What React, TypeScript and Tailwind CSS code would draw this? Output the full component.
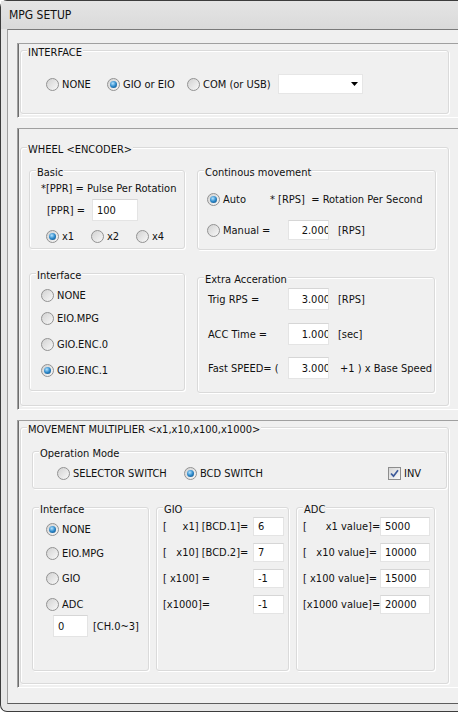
import type { ReactNode } from "react";

function Radio({ checked }: { checked?: boolean }) {
  return (
    <span className="w-[13px] h-[13px] shrink-0 rounded-full border border-[#929292] bg-[linear-gradient(135deg,#d2d2d2,#f8f8f8)] flex items-center justify-center">
      {checked && <span className="w-[7px] h-[7px] rounded-full bg-[radial-gradient(circle_at_40%_35%,#b4e3ff_0%,#2c88c9_50%,#0c4274_100%)]" />}
    </span>
  );
}

function RadioItem({ label, checked, className = "" }: { label: string; checked?: boolean; className?: string }) {
  return (
    <div className={`flex items-center shrink-0 ${className}`}>
      <Radio checked={checked} />
      <span className="ml-[3px] whitespace-nowrap">{label}</span>
    </div>
  );
}

function Edit({ className = "", right, children }: { className?: string; right?: boolean; children: ReactNode }) {
  return (
    <div className={`shrink-0 bg-white border border-[#e4e4e4] border-t-[#d6d6d6] flex items-center overflow-hidden whitespace-nowrap ${right ? "justify-end" : "pl-[4px]"} ${className}`}>
      {right ? <span className="mr-[-2px]">{children}</span> : children}
    </div>
  );
}

function Group({ label, className = "", children }: { label: string; className?: string; children?: ReactNode }) {
  return (
    <div className={`relative shrink-0 border border-[#dadada] rounded-[3px] shadow-[inset_1px_1px_0_#fff,1px_1px_0_#fff] ${className}`}>
      <span className="absolute left-[6px] top-[-5px] px-[1px] bg-[#f0f0f0] leading-[13px] whitespace-nowrap">{label}</span>
      {children}
    </div>
  );
}

function Panel({ className = "", children }: { className?: string; children: ReactNode }) {
  return (
    <div className={`shrink-0 border-t border-l border-b border-t-[#a0a0a0] border-l-[#a0a0a0] border-b-white shadow-[inset_1px_0_0_#6e6e6e] ${className}`}>
      {children}
    </div>
  );
}

export default function App() {
  return (
    <div className="w-[458px] h-[712px] overflow-hidden bg-white">
      <div className="w-[458px] h-[712px] flex flex-col bg-[#e7e7e7] border-l border-t border-b border-[#3c3c3c] rounded-tl-[7px] rounded-bl-[7px] text-[11px] leading-[13px] text-[#111] font-['DejaVu_Sans_Condensed','DejaVu_Sans',sans-serif] [font-stretch:semi-condensed]">
        <div className="h-[28px] shrink-0 flex items-center pl-[8px] text-[12px] bg-[linear-gradient(#e4e4e4,#dadada)]">MPG SETUP</div>

        <div className="flex-1 ml-[6px] mb-[7px] bg-[#f0f0f0] border-t border-l border-b border-t-[#7a7a7a] border-l-[#a0a0a0] border-b-[#5c5c5c] pt-[13px] pl-[9px] flex flex-col gap-[10px]">
          {/* INTERFACE */}
          <Panel className="h-[75px]">
            <Group label="INTERFACE" className="ml-[2px] mt-[6px] mr-[9px] h-[64px]">
              <div className="flex items-center h-[20px] mt-[23px] pl-[25px]">
                <RadioItem label="NONE" className="w-[61px]" />
                <RadioItem label="GIO or EIO" checked className="w-[80px]" />
                <RadioItem label="COM (or USB)" className="w-[91px]" />
                <div className="w-[85px] h-[20px] bg-white border border-[#e6e6e6] flex items-center justify-end pr-[4px]">
                  <svg width="7" height="4" viewBox="0 0 7 4">
                    <polygon points="0,0 7,0 3.5,4" fill="#000" />
                  </svg>
                </div>
              </div>
            </Group>
          </Panel>

          {/* WHEEL */}
          <Panel className="h-[282px]">
            <Group label="WHEEL <ENCODER>" className="ml-[2px] mt-[18px] mr-[9px] h-[259px]">
              <div className="flex items-start mt-[22px] pl-[8px] gap-[12px]">
                <Group label="Basic" className="w-[156px] h-[79px]">
                  <div className="pl-[11px] mt-[10px] h-[14px] flex items-center whitespace-nowrap">*[PPR] = Pulse Per Rotation</div>
                  <div className="flex items-center mt-[4px] h-[22px] pl-[17px]">
                    <span className="w-[45px]">[PPR] =</span>
                    <Edit className="w-[46px] h-[22px]">100</Edit>
                  </div>
                  <div className="flex items-center mt-[7px] h-[16px] pl-[16px]">
                    <RadioItem label="x1" checked className="w-[45px]" />
                    <RadioItem label="x2" className="w-[45px]" />
                    <RadioItem label="x4" className="w-[45px]" />
                  </div>
                </Group>
                <Group label="Continous movement" className="w-[239px] h-[80px]">
                  <div className="flex items-center mt-[18px] h-[20px] pl-[9px]">
                    <RadioItem label="Auto" checked className="w-[63px]" />
                    <span className="whitespace-pre">{"* [RPS]  = Rotation Per Second"}</span>
                  </div>
                  <div className="flex items-center mt-[11px] h-[20px] pl-[9px]">
                    <RadioItem label="Manual =" className="w-[81px]" />
                    <Edit right className="w-[41px] h-[20px]">2.000</Edit>
                    <span className="ml-[9px]">[RPS]</span>
                  </div>
                </Group>
              </div>

              <div className="flex items-start mt-[23px] pl-[8px] gap-[12px]">
                <Group label="Interface" className="w-[156px] h-[118px] pl-[11px]">
                  <RadioItem label="NONE" className="h-[20px] mt-[11px]" />
                  <RadioItem label="EIO.MPG" className="h-[20px] mt-[3px]" />
                  <RadioItem label="GIO.ENC.0" className="h-[20px] mt-[6px]" />
                  <RadioItem label="GIO.ENC.1" checked className="h-[20px] mt-[6px]" />
                </Group>
                <Group label="Extra Acceration" className="w-[238px] h-[116px] mt-[4px] pl-[10px]">
                  <div className="flex items-center h-[22px] mt-[10px]">
                    <span className="w-[80px]">Trig RPS =</span>
                    <Edit right className="w-[41px] h-[22px]">3.000</Edit>
                    <span className="ml-[9px]">[RPS]</span>
                  </div>
                  <div className="flex items-center h-[22px] mt-[13px]">
                    <span className="w-[80px]">ACC Time =</span>
                    <Edit right className="w-[41px] h-[22px]">1.000</Edit>
                    <span className="ml-[9px]">[sec]</span>
                  </div>
                  <div className="flex items-center h-[22px] mt-[12px]">
                    <span className="w-[80px] whitespace-nowrap">Fast SPEED= (</span>
                    <Edit right className="w-[41px] h-[22px]">3.000</Edit>
                    <span className="ml-[11px] whitespace-nowrap">+1 ) x Base Speed</span>
                  </div>
                </Group>
              </div>
            </Group>
          </Panel>

          {/* MOVEMENT MULTIPLIER */}
          <Panel className="h-[268px]">
            <Group label="MOVEMENT MULTIPLIER <x1,x10,x100,x1000>" className="ml-[2px] mt-[6px] mr-[9px] h-[257px]">
              <Group label="Operation Mode" className="ml-[11px] mt-[23px] w-[415px] h-[38px]">
                <div className="flex items-center mt-[13px] h-[16px] pl-[24px]">
                  <RadioItem label="SELECTOR SWITCH" className="w-[127px]" />
                  <RadioItem label="BCD SWITCH" checked className="w-[204px]" />
                  <div className="flex items-center">
                    <span className="w-[13px] h-[13px] border border-[#8d8d8d] bg-[linear-gradient(135deg,#d6d6d6,#fafafa)] flex items-center justify-center">
                      <svg width="11" height="11" viewBox="0 0 11 11">
                        <path d="M2 5.5 L4.5 8.2 L9 2.2" stroke="#3d5a9a" strokeWidth="1.7" fill="none" />
                      </svg>
                    </span>
                    <span className="ml-[3px]">INV</span>
                  </div>
                </div>
              </Group>

              <div className="flex items-start mt-[18px] ml-[11px] gap-[7px]">
                <Group label="Interface" className="w-[117px] h-[164px]">
                  <div className="pl-[13px]">
                    <RadioItem label="NONE" checked className="h-[20px] mt-[11px]" />
                    <RadioItem label="EIO.MPG" className="h-[20px] mt-[4px]" />
                    <RadioItem label="GIO" className="h-[20px] mt-[5px]" />
                    <RadioItem label="ADC" className="h-[20px] mt-[6px]" />
                  </div>
                  <div className="flex items-center mt-[1px] h-[22px] pl-[20px]">
                    <Edit className="w-[35px] h-[22px]">0</Edit>
                    <span className="ml-[5px] whitespace-nowrap">[CH.0~3]</span>
                  </div>
                </Group>

                <Group label="GIO" className="w-[133px] h-[164px] pl-[6px]">
                  {[
                    ["[     x1] [BCD.1]=", "6", "mt-[9px]"],
                    ["[   x10] [BCD.2]=", "7", "mt-[7px]"],
                    ["[ x100] =", "-1", "mt-[7px]"],
                    ["[x1000]=", "-1", "mt-[7px]"],
                  ].map(([l, v, m]) => (
                    <div key={l} className={`flex items-center h-[19px] ${m}`}>
                      <span className="w-[90px] whitespace-pre">{l}</span>
                      <Edit className="w-[31px] h-[19px]">{v}</Edit>
                    </div>
                  ))}
                </Group>

                <Group label="ADC" className="w-[139px] h-[164px] pl-[6px]">
                  {[
                    ["[      x1 value]=", "5000", "mt-[9px]"],
                    ["[   x10 value]=", "10000", "mt-[7px]"],
                    ["[ x100 value]=", "15000", "mt-[7px]"],
                    ["[x1000 value]=", "20000", "mt-[7px]"],
                  ].map(([l, v, m]) => (
                    <div key={l} className={`flex items-center h-[19px] ${m}`}>
                      <span className="w-[77px] whitespace-pre">{l}</span>
                      <Edit className="w-[50px] h-[19px]">{v}</Edit>
                    </div>
                  ))}
                </Group>
              </div>
            </Group>
          </Panel>
        </div>
      </div>
    </div>
  );
}
